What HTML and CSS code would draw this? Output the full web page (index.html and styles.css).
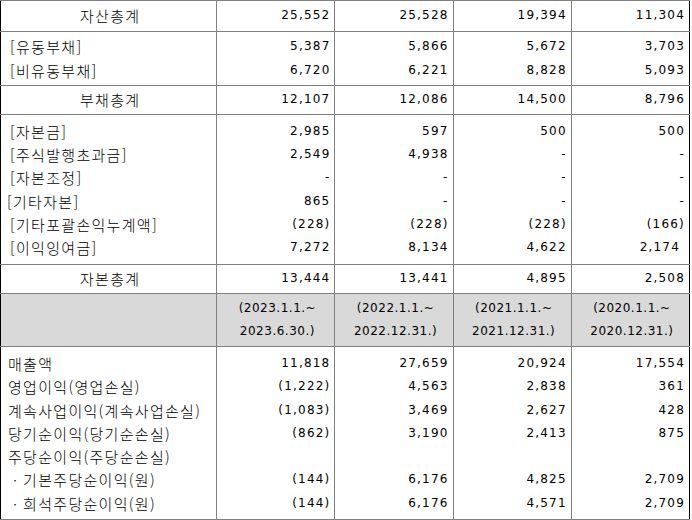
FILE: index.html
```html
<!DOCTYPE html>
<html lang="ko">
<head>
<meta charset="utf-8">
<title>요약 재무정보</title>
<link rel="stylesheet" href="styles.css">
</head>
<body>
<table class="fin">
  <colgroup>
    <col class="c-label"><col class="c-num"><col class="c-num"><col class="c-num2"><col class="c-num2">
  </colgroup>
  <tbody>
    <tr class="r-cut"><td></td><td></td><td></td><td></td><td></td></tr>
    <tr class="r-first">
      <td class="total">자산총계</td>
      <td class="num">25,552</td><td class="num">25,528</td><td class="num">19,394</td><td class="num">11,304</td>
    </tr>
    <tr class="r-two">
      <td class="lbl bracket">[유동부채]<br>[비유동부채]</td>
      <td class="num">5,387<br>6,720</td>
      <td class="num">5,866<br>6,221</td>
      <td class="num">5,672<br>8,828</td>
      <td class="num">3,703<br>5,093</td>
    </tr>
    <tr class="r-single">
      <td class="total">부채총계</td>
      <td class="num">12,107</td><td class="num">12,086</td><td class="num">14,500</td><td class="num">8,796</td>
    </tr>
    <tr class="r-six">
      <td class="lbl bracket">[자본금]<br>[주식발행초과금]<br>[자본조정]<br><span class="nudge">[기타자본]</span><br>[기타포괄손익누계액]<br>[이익잉여금]</td>
      <td class="num">2,985<br>2,549<br>-<br>865<br>(228)<br>7,272</td>
      <td class="num">597<br>4,938<br>-<br>-<br>(228)<br>8,134</td>
      <td class="num">500<br>-<br>-<br>-<br>(228)<br>4,622</td>
      <td class="num">500<br>-<br>-<br>-<br>(166)<br>2,174&nbsp;</td>
    </tr>
    <tr class="r-single">
      <td class="total">자본총계</td>
      <td class="num">13,444</td><td class="num">13,441</td><td class="num">4,895</td><td class="num">2,508</td>
    </tr>
    <tr class="r-head">
      <td></td>
      <td class="period">(2023.1.1.~<br>2023.6.30.)</td>
      <td class="period">(2022.1.1.~<br>2022.12.31.)</td>
      <td class="period">(2021.1.1.~<br>2021.12.31.)</td>
      <td class="period">(2020.1.1.~<br>2020.12.31.)</td>
    </tr>
    <tr class="r-income">
      <td class="lbl">매출액<br>영업이익(영업손실)<br>계속사업이익(계속사업손실)<br>당기순이익(당기순손실)<br>주당순이익(주당순손실)<br>ㆍ기본주당순이익(원)<br>ㆍ희석주당순이익(원)</td>
      <td class="num">11,818<br>(1,222)<br>(1,083)<br>(862)<br><br>(144)<br>(144)</td>
      <td class="num">27,659<br>4,563<br>3,469<br>3,190<br><br>6,176<br>6,176</td>
      <td class="num">20,924<br>2,838<br>2,627<br>2,413<br><br>4,825<br>4,571</td>
      <td class="num">17,554<br>361<br>428<br>875<br><br>2,709<br>2,709</td>
    </tr>
  </tbody>
</table>
</body>
</html>
```
FILE: styles.css
```css
html, body {
  margin: 0;
  padding: 0;
  overflow: hidden;
  background: #fff;
}

.fin {
  border-collapse: collapse;
  table-layout: fixed;
  width: 690px;
  font-family: "Noto Sans CJK KR", sans-serif;
  font-weight: 300;
  font-size: 15px;
  line-height: 23.3px;
  color: #000;
}

.c-label { width: 216px; }
.c-num { width: 118px; }
.c-num2 { width: 118px; }

.fin td {
  border: 1px solid #808080;
  padding: 0 4px 0 7px;
  vertical-align: middle;
  white-space: nowrap;
  overflow: hidden;
}

.fin td:first-child { border-left: 1px solid #000; }
.fin td:last-child { border-right: 1px solid #000; }

.r-cut td {
  height: 0;
  padding: 0;
  border-top: 0;
}

.r-first td { height: 30px; }
.r-two td { height: 53px; }
.r-single td { height: 28px; }
.r-six td { height: 149px; }
.r-head td { height: 52px; background: #d9d9d9; }

.r-income td {
  vertical-align: top;
  padding-top: 5px;
  padding-bottom: 4px;
}

.total {
  text-align: center;
  letter-spacing: 1.3px;
}

.lbl {
  text-align: left;
  letter-spacing: 1.3px;
}

.fin td.bracket { padding-left: 9px; }

.nudge { margin-left: -3px; }

.num,
.period {
  font-family: "DejaVu Sans", "Noto Sans CJK KR", sans-serif;
  font-weight: 400;
  font-size: 12px;
}

.num {
  text-align: right;
  padding-right: 3px;
  letter-spacing: 1.2px;
}

.period {
  text-align: center;
  padding: 0;
  letter-spacing: 0.5px;
}
```
